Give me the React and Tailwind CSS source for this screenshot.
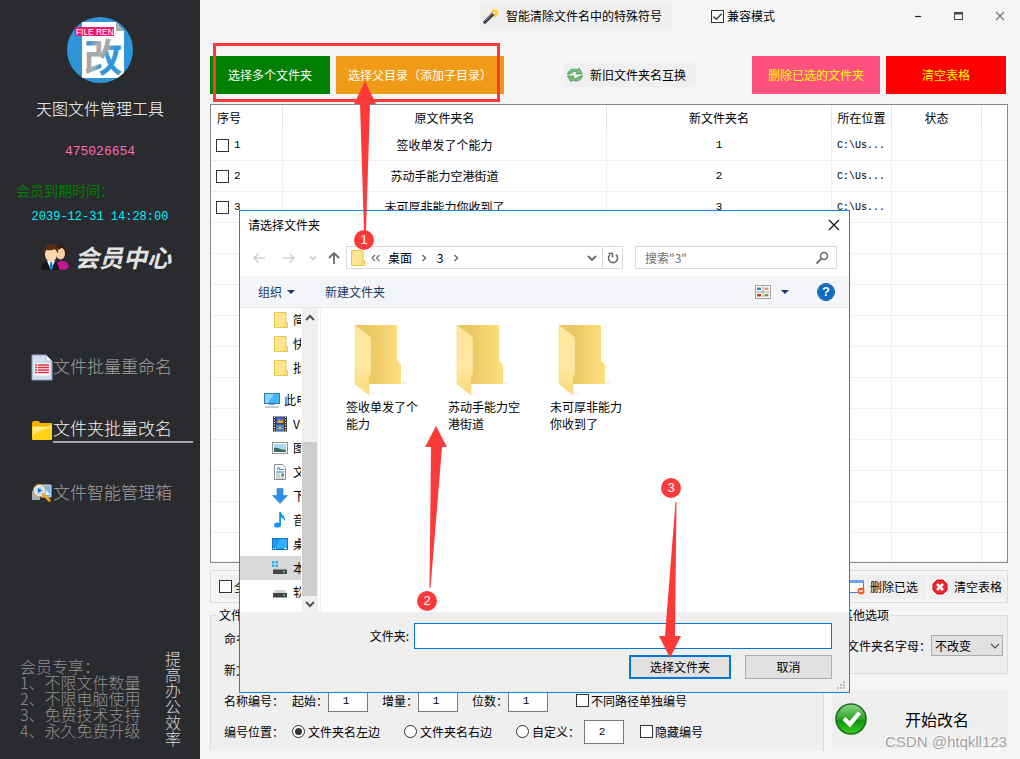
import React from "react";

const columns = [
  { name: "序号", width: "w-[72px]" },
  { name: "原文件夹名", width: "" },
  { name: "新文件夹名", width: "w-[225px]" },
  { name: "所在位置", width: "w-[60px]" },
  { name: "状态", width: "w-[90px]" },
  { name: "", width: "w-[25px]" },
];

const rows = [
  { id: "1", from: "签收单发了个能力", to: "1", path: "C:\\Us..." },
  { id: "2", from: "苏动手能力空港街道", to: "2", path: "C:\\Us..." },
  { id: "3", from: "未可厚非能力你收到了", to: "3", path: "C:\\Us..." },
];

const mono = "font-['Liberation_Mono','Noto_Sans_CJK_SC',monospace]";

/* ---------- form parts ---------- */

function Tick({ label, checked = false, gap = "gap-[2px]", text = "" }) {
  return (
    <label className={"flex items-center whitespace-nowrap " + gap}>
      <span className="relative block size-[13px] shrink-0">
        <input
          type="checkbox"
          defaultChecked={checked}
          className="peer block size-[13px] appearance-none border border-[#333] bg-white"
        />
        <svg viewBox="0 0 13 13" className="pointer-events-none absolute inset-0 hidden size-[13px] peer-checked:block">
          <path d="M2.5 6.5 5.3 9.3 10.7 3.7" fill="none" stroke="#333" strokeWidth="1.3" />
        </svg>
      </span>
      <span className={text}>{label}</span>
    </label>
  );
}

function Radio({ label, checked = false }) {
  return (
    <label className="flex items-center gap-[3px] whitespace-nowrap">
      <input
        type="radio"
        name="position"
        defaultChecked={checked}
        className="grid size-[13px] shrink-0 appearance-none place-items-center rounded-full border border-[#333] bg-white before:size-[7px] before:rounded-full checked:before:bg-[#333] checked:before:content-['']"
      />
      {label}
    </label>
  );
}

function NumberBox({ label, value }) {
  return (
    <label className="flex items-center">
      {label}
      <input
        type="text"
        defaultValue={value}
        className={"h-[22px] w-10 border border-[#7a7a7a] bg-white pr-1 text-center text-[11px] " + mono}
      />
    </label>
  );
}

/* ---------- icons ---------- */

function Logo() {
  return (
    <svg viewBox="0 0 66 66" className="size-[66px]">
      <defs>
        <linearGradient id="logoGlyph" x1="0" y1="0" x2="1" y2="1">
          <stop offset="0.05" stopColor="#a4a9ae" />
          <stop offset="0.2" stopColor="#2f94d8" />
          <stop offset="0.32" stopColor="#a4a9ae" />
          <stop offset="0.5" stopColor="#a4a9ae" />
          <stop offset="0.58" stopColor="#2f94d8" />
          <stop offset="0.85" stopColor="#2f94d8" />
          <stop offset="0.95" stopColor="#a4a9ae" />
        </linearGradient>
        <clipPath id="logoDisc">
          <circle cx="33" cy="33" r="33" />
        </clipPath>
      </defs>
      <g clipPath="url(#logoDisc)">
        <rect width="66" height="66" fill="#2f94d8" />
        <path d="M15 5H49L57 14V61H15Z" fill="#fff" />
        <path d="M49 5V14H57Z" fill="#a9b1b8" />
      </g>
      <text
        x="17"
        y="54"
        fontSize="38"
        fontWeight="500"
        fontFamily="'Noto Sans CJK SC', sans-serif"
        fill="url(#logoGlyph)"
        stroke="url(#logoGlyph)"
        strokeWidth="0.8"
      >
        改
      </text>
      <rect x="8" y="10" width="39" height="9" fill="#ea1a6c" />
      <text x="9" y="17.5" fontSize="8.4" fontFamily="'Liberation Sans', sans-serif" fill="#fff">FILE REN</text>
    </svg>
  );
}

function PeopleIcon() {
  return (
    <svg viewBox="0 0 28 28" className="h-7 w-7">
      <path d="M15 26c0-6 2-8 6-8s7 3 7 6l-4 3z" fill="#c4168f" />
      <path d="M14 9c0-5 3-7 6-7 4 0 6 4 5 9l-2 3h-7z" fill="#3b1d12" />
      <ellipse cx="19.500" cy="10.500" rx="4.500" ry="6" fill="#f7cfa6" />
      <path d="M15 7c2 0 5-1 7-3 2 2 3 4 3 5V6c-2-4-8-4-10 0z" fill="#3b1d12" />
      <path d="M0 27c0-7 3-9 9-9s9 3 9 9z" fill="#15161c" />
      <path d="M6 18l4 9 4-9z" fill="#fff" />
      <path d="M9.200 19h2l.8 6-1.800 2-1.800-2z" fill="#1884d8" />
      <ellipse cx="10" cy="11.500" rx="6" ry="7.500" fill="#fcd6ad" />
      <path d="M3 11C2 4 6 1 10.500 1S18 4 17 11c-1-3-2-4-3-5-3 2-7 1-9 1-1 1-1 2-2 4z" fill="#5a2c12" />
    </svg>
  );
}

function DocIcon() {
  return (
    <svg viewBox="0 0 22 27" className="h-[27px] w-[22px] shrink-0">
      <path d="M1 1h14l6 6v19H1z" fill="#d3dff0" stroke="#8fa3c4" />
      <path d="M15 1v6h6z" fill="#fff" stroke="#8fa3c4" strokeWidth=".7" />
      <path d="M3.500 9.500h15v12h-15z" fill="#fff" />
      <path d="M4 11h14M4 13.500h14M4 16h14M4 18.500h14" stroke="#d9333f" strokeWidth="1.500" />
      <path d="M6.500 10v10" stroke="#fff" strokeWidth=".7" />
    </svg>
  );
}

function YellowFolderIcon() {
  return (
    <svg viewBox="0 0 22 22" className="size-[22px] shrink-0">
      <path d="M1 4Q1 2 3 2h4q1 0 1.500 1L9 4h11q1 0 1 1v15H1z" fill="#f0b400" />
      <path d="M1 7h16l4-2v15q0 1-1 1H2q-1 0-1-1z" fill="#ffd21c" />
      <path d="M2 8h16l2-2v3Q8 10 2 17z" fill="#ffea86" />
    </svg>
  );
}

function SearchToolIcon() {
  return (
    <svg viewBox="0 0 22 20" className="h-5 w-[22px] shrink-0">
      <path d="M10 2h10v12H10z" fill="#7db7e8" stroke="#c7dff2" />
      <path d="M12 12l3-6 4 6z" fill="#d9ecfa" />
      <path d="M1 8h8v9H1z" fill="#a8aeb4" />
      <circle cx="8.500" cy="7.500" r="5" fill="#bfe2fa" stroke="#e9e4da" strokeWidth="2" />
      <circle cx="8.500" cy="7.500" r="6.200" fill="none" stroke="#e09a30" strokeWidth=".9" />
      <path d="M7 5l4 2.500L7 10z" fill="#1c6fb5" />
      <path d="M12.500 11.500l6 6" stroke="#f2a51c" strokeWidth="2.600" strokeLinecap="round" />
    </svg>
  );
}

function WandIcon() {
  return (
    <svg viewBox="0 0 16 16" className="size-4 shrink-0">
      <path d="M11 0l1 2 2-1-.5 2.300L16 4l-2 1.500 1.500 2-2.500 0-.5 2.500-1.500-2-2 1 .3-2.500L7 5.500l2-1L8.500 2l2 .5z" fill="#ffc81e" />
      <path d="M1.800 14.200L10 6" stroke="#3a3f45" strokeWidth="3.200" strokeLinecap="round" />
      <path d="M1.500 13.500L9 6" stroke="#9aa1a8" strokeWidth=".8" />
      <path d="M10 6l2-2" stroke="#f5f0d8" strokeWidth="2.400" />
    </svg>
  );
}

function SwapIcon() {
  return (
    <svg viewBox="0 0 16 16" className="size-4 shrink-0">
      <path d="M.6 7.500C1 3 6 .5 10.500 3L12 1l3.500 6H9l1.300-1.800C8 4 5.500 4.500 5 6z" fill="#7cc07c" stroke="#3f8b47" strokeWidth=".7" />
      <path d="M15.400 8.500C15 13 10 15.500 5.500 13L4 15 .5 9H7l-1.300 1.800C8 12 10.500 11.500 11 10z" fill="#7cc07c" stroke="#3f8b47" strokeWidth=".7" />
    </svg>
  );
}

function WindowMinusIcon() {
  return (
    <svg viewBox="0 0 16 16" className="size-4 shrink-0">
      <rect x="0.500" y="1.500" width="14" height="12" fill="#fff" stroke="#4a7fc8" />
      <rect x="0" y="1" width="15" height="3" fill="#6fa3e6" />
      <circle cx="12" cy="12" r="3.500" fill="#e8641b" />
      <path d="M10 12h4" stroke="#fff" strokeWidth="1.300" />
    </svg>
  );
}

function RedCrossIcon() {
  return (
    <svg viewBox="0 0 16 16" className="size-4 shrink-0">
      <path d="M5 1h6l4 4v6l-4 4H5l-4-4V5z" fill="#f0262d" stroke="#cc0f18" />
      <path d="M5 5l6 6M11 5l-6 6" stroke="#fff" strokeWidth="2.600" />
    </svg>
  );
}

function GreenCheckIcon() {
  return (
    <svg viewBox="0 0 32 32" className="size-8 shrink-0">
      <defs>
        <linearGradient id="okFill" x1="0" y1="0" x2="0" y2="1">
          <stop offset="0" stopColor="#8fd98a" />
          <stop offset="0.5" stopColor="#2fa42b" />
          <stop offset="0.55" stopColor="#13930f" />
          <stop offset="1" stopColor="#2fd11f" />
        </linearGradient>
      </defs>
      <circle cx="16" cy="16" r="15" fill="url(#okFill)" stroke="#1d6b22" strokeWidth="1.500" />
      <path d="M7.500 17l3-3 4 4 8.500-9.500 3 2.500L15 24.500z" fill="#fff" />
    </svg>
  );
}

function SmallFolder() {
  return (
    <svg viewBox="0 0 14 16" className="h-4 w-[14px] shrink-0">
      <path d="M.5.500h11.500v10h1.500v5H.5z" fill="#ffe591" stroke="#e8c445" />
      <path d="M11 15v-3.500l1-1" fill="none" stroke="#e8c445" />
    </svg>
  );
}

function BigFolder({ id }) {
  return (
    <svg viewBox="0 0 56 72" className="ml-2 h-[72px] w-14">
      <defs>
        <linearGradient id={id + "b"} x1="0" y1="0" x2="1" y2="0">
          <stop offset="0.3" stopColor="#e9c763" />
          <stop offset="1" stopColor="#ffe080" />
        </linearGradient>
        <linearGradient id={id + "f"} x1="0" y1="0" x2="0" y2="1">
          <stop offset="0" stopColor="#ffe69c" />
          <stop offset="0.6" stopColor="#ffe8a3" />
          <stop offset="1" stopColor="#fbd974" />
        </linearGradient>
      </defs>
      <path d="M46 60l7-3-1 2-5 1zM16 70l5-2-2 2z" fill="#e3e3e3" />
      <path d="M1 1H43V36L47 41V60H1Z" fill={"url(#" + id + "b)"} />
      <path d="M1 1L15 11.500Q17 13 17 15V50L15 53V71L1 60Z" fill={"url(#" + id + "f)"} stroke="#f3d27a" strokeWidth=".5" />
    </svg>
  );
}

function TreeIcon({ kind }) {
  if (kind === "folder") return <SmallFolder />;
  return (
    <svg viewBox="0 0 16 16" className="size-4 shrink-0">
      {kind === "pc" && (
        <>
          <rect x="0.500" y="1.500" width="15" height="10" fill="#43b6f7" stroke="#3a7ca8" />
          <path d="M1 2h9L4 11H1z" fill="#8ad4fb" />
          <path d="M5 12.500h6M1 15h14" stroke="#7fa0b5" />
        </>
      )}
      {kind === "video" && (
        <>
          <rect x="1" y="0.500" width="14" height="15" fill="#333" />
          <rect x="4" y="1" width="8" height="6.500" fill="#4059c7" />
          <rect x="4" y="8.500" width="8" height="6.500" fill="#3f7fd6" />
          <path d="M5 6l2-3 2 2 2-2v4H5zM5 13l3-3 3 3z" fill="#e8a22b" />
          <path d="M2.500 1v15M13.500 1v15" stroke="#fff" strokeWidth="1.200" strokeDasharray="1 1.500" />
        </>
      )}
      {kind === "picture" && (
        <>
          <rect x="0.500" y="2.500" width="15" height="11" fill="#fff" stroke="#8a8f94" />
          <rect x="2" y="4" width="12" height="8" fill="#a9d7f5" />
          <path d="M2 8c4-1 6 2 12 2v2H2z" fill="#3d6c5c" />
        </>
      )}
      {kind === "doc" && (
        <>
          <path d="M2.500.500h8l3 3v12h-11z" fill="#fff" stroke="#8a8f94" />
          <path d="M5 6l1.500-3L8 6M8.500 5.500h3M4 8h8" stroke="#1c86c8" strokeWidth="1" fill="none" />
          <path d="M4 10h4M4 12h4M4 14h8" stroke="#9aa" />
          <rect x="9" y="9.500" width="3" height="3" fill="#4c9c6c" />
        </>
      )}
      {kind === "down" && <path d="M5 0.500h6v7h4.500L8 15.500.5 7.500H5z" fill="#2f8fe6" stroke="#2679cc" strokeWidth=".6" />}
      {kind === "music" && (
        <>
          <ellipse cx="5.500" cy="13" rx="3.500" ry="2.600" fill="#1296f0" />
          <path d="M7.200 0h1.800c0 3 5 4 4 9.500-.7-2.500-2-3.500-4-4v8H7.200z" fill="#1296f0" />
        </>
      )}
      {kind === "desktop" && (
        <>
          <rect x="0.500" y="2.500" width="15" height="11" fill="#1a9cf5" stroke="#1670b8" />
          <path d="M8 3h7v9H4z" fill="#33aefb" />
          <path d="M1 12.500h1M3 12.500h1M12 12.500h3" stroke="#fff" />
        </>
      )}
      {kind === "system" && (
        <>
          <path d="M0 1h2.500v2.500H0zM3.500 1H6v2.500H3.500zM0 4.500h2.500V7H0zM3.500 4.500H6V7H3.500z" fill="#1fb6f2" />
          <path d="M3 7h10l2 3H1z" fill="#d0d3d6" />
          <rect x="1" y="9.500" width="14" height="4.500" rx=".5" fill="#444" />
          <rect x="11" y="11" width="2" height="1.500" fill="#3ee04a" />
        </>
      )}
      {kind === "drive" && (
        <>
          <path d="M3 6h10l2 3.500H1z" fill="#d0d3d6" />
          <rect x="1" y="9" width="14" height="4.500" rx=".5" fill="#444" />
          <rect x="11" y="10.500" width="2" height="1.500" fill="#3ee04a" />
        </>
      )}
    </svg>
  );
}

function Stroke({ d, box = "0 0 16 16", className = "size-4", color = "#6b6b6b", width = 1.5 }) {
  return (
    <svg viewBox={box} className={"shrink-0 " + className}>
      <path d={d} fill="none" stroke={color} strokeWidth={width} />
    </svg>
  );
}

function Triangle() {
  return (
    <svg viewBox="0 0 8 4" className="h-1 w-2 shrink-0">
      <path d="M0 0h8L4 4z" fill="#1f3a68" />
    </svg>
  );
}

/* ---------- sidebar ---------- */

function NavItem({ icon, label, active = false }) {
  return (
    <a href="#" className="flex h-7 items-center pl-[31px]">
      {icon}
      <span
        className={
          active
            ? "h-[26px] w-[140px] border-b-2 border-[#a5a5a5] text-[17px] leading-[22px] text-[#f2f2f2]"
            : "h-[26px] text-[17px] leading-6 text-[#a0a0a0]"
        }
      >
        {label}
      </span>
    </a>
  );
}

function Sidebar() {
  return (
    <aside className="flex w-[200px] shrink-0 flex-col bg-[#2a2b2f] pt-[17px] pb-[13px]">
      <div className="flex flex-col items-center">
        <Logo />
        <h1 className="mt-[15px] text-base leading-5 font-light text-white">天图文件管理工具</h1>
        <p className={"mt-6 text-[13px] leading-5 text-[#ff69b4] " + mono}>475026654</p>
      </div>
      <p className="mt-[18px] pl-4 text-[14px] leading-5 text-[#008000]">会员到期时间：</p>
      <p className={"mt-[7px] text-center text-xs leading-5 text-[#00f0f8] " + mono}>2039-12-31 14:28:00</p>
      <a href="#" className="mt-[14px] flex h-8 items-center gap-[6px] pl-[41px] text-2xl font-bold text-[#e2e2e2] italic">
        <PeopleIcon />
        会员中心
      </a>
      <nav className="mt-20 flex flex-col gap-[35px] font-light">
        <NavItem icon={<DocIcon />} label="文件批量重命名" />
        <NavItem icon={<YellowFolderIcon />} label="文件夹批量改名" active />
        <NavItem icon={<SearchToolIcon />} label="文件智能管理箱" />
      </nav>
      <div className="mt-auto flex items-center justify-between pr-[19px] pl-5 text-base font-light">
        <div className="leading-4 whitespace-nowrap text-[#909090]">
          <p>会员专享：</p>
          <p>1、不限文件数量</p>
          <p>2、不限电脑使用</p>
          <p>3、免费技术支持</p>
          <p>4、永久免费升级</p>
        </div>
        <p className="w-4 leading-4 break-all text-[#d8d8d8]">提高办公效率</p>
      </div>
    </aside>
  );
}

/* ---------- main window ---------- */

function TitleBar() {
  return (
    <header className="flex h-8 items-center justify-end">
      <button className="mr-[39px] flex h-[30px] items-center gap-[7px] bg-[#efefef] pr-[10px] pl-[3px]">
        <WandIcon />
        智能清除文件名中的特殊符号
      </button>
      <div className="mr-[122px]">
        <Tick label="兼容模式" checked gap="gap-[3px]" />
      </div>
      <button aria-label="最小化" className="flex w-[41px] justify-center">
        <Stroke d="M5 8.500h6" color="#222" width={1.2} />
      </button>
      <button aria-label="最大化" className="flex w-[41px] justify-center">
        <svg viewBox="0 0 16 16" className="size-4">
          <rect x="3.500" y="4.500" width="8" height="7" fill="none" stroke="#444" />
          <path d="M3 5.500h9" stroke="#444" strokeWidth="2" />
        </svg>
      </button>
      <button aria-label="关闭" className="flex w-[41px] justify-center">
        <Stroke d="M4 4l8 8M12 4l-8 8" color="#777" width={1.2} />
      </button>
    </header>
  );
}

function Toolbar() {
  return (
    <div className="mt-6 flex h-[38px] items-center pr-[2px]">
      <button className="h-full w-[120px] bg-[#008000] text-white">选择多个文件夹</button>
      <button className="ml-[6px] h-full w-[168px] bg-[#f09b18] text-white">选择父目录（添加子目录）</button>
      <button className="mr-14 ml-auto flex h-6 items-center gap-[7px] bg-[#efefef] pr-[10px] pl-[3px]">
        <SwapIcon />
        新旧文件夹名互换
      </button>
      <button className="mr-[6px] h-full w-32 bg-[#ff5180] text-[#ffff00]">删除已选的文件夹</button>
      <button className="h-full w-[120px] bg-[#ff0000] text-[#ffff00]">清空表格</button>
    </div>
  );
}

function FolderTable() {
  const fillers = Array.from({ length: 11 }, (_, i) => i);
  const cell = "border-r border-b border-[#f0f0f0] p-0 last:border-r-0";
  return (
    <div className="mt-[10px] border border-[#828790] bg-white">
      <table className="w-full table-fixed border-separate border-spacing-0 text-center">
        <thead>
          <tr className="h-[25px]">
            {columns.map((c, i) => (
              <th
                key={i}
                className={
                  "border-r border-[#e5e5e5] p-0 font-normal last:border-r-0 " +
                  c.width +
                  (i === 0 ? " pl-[6px] text-left" : "")
                }
              >
                {c.name}
              </th>
            ))}
          </tr>
        </thead>
        <tbody>
          {rows.map((r) => (
            <tr key={r.id} className="h-[31px]">
              <td className={cell}>
                <div className="pl-[5px]">
                  <Tick label={r.id} gap="gap-[5px]" text={"text-[11px] " + mono} />
                </div>
              </td>
              <td className={cell}>{r.from}</td>
              <td className={cell + " text-[11px] " + mono}>{r.to}</td>
              <td className={cell + " text-[10px] " + mono}>
                <div className="pt-px pl-[5px] text-left">{r.path}</div>
              </td>
              <td className={cell}></td>
              <td className={cell}></td>
            </tr>
          ))}
          {fillers.map((i) => (
            <tr key={i} className="h-[31px] last:h-[29px]">
              {columns.map((c, j) => (
                <td key={j} className={cell}></td>
              ))}
            </tr>
          ))}
        </tbody>
      </table>
    </div>
  );
}

function ActionPanel() {
  return (
    <div className="mt-[7px] flex h-[33px] items-center gap-1 border border-[#dcdcdc] pl-2">
      <div className="mr-auto flex h-6 items-center bg-[#efefef]">
        <Tick label="全选" />
      </div>
      <button className="flex h-6 items-center gap-[5px] bg-[#efefef] px-[7px]">
        <WindowMinusIcon />
        删除已选
      </button>
      <button className="flex h-6 items-center gap-[6px] bg-[#efefef] pr-[5px] pl-[3px]">
        <RedCrossIcon />
        清空表格
      </button>
    </div>
  );
}

function Settings() {
  return (
    <div className="mt-1 flex items-start gap-2">
      <fieldset className="min-w-0 flex-1 border border-b-0 border-[#dcdcdc] bg-[#efefef] pb-1 pl-[13px]">
        <legend className="-ml-[7px] px-[2px] leading-4">文件夹</legend>
        <div className="flex h-[31px] items-center">命名</div>
        <div className="flex h-[31px] items-center">新文件夹</div>
        <div className="flex h-[31px] items-center">
          <span className="mr-2">名称编号：</span>
          <div className="mr-7 flex gap-[14px]">
            <NumberBox label="起始：" value="1" />
            <NumberBox label="增量：" value="1" />
            <NumberBox label="位数：" value="1" />
          </div>
          <Tick label="不同路径单独编号" />
        </div>
        <div className="flex h-[31px] items-center">
          <span className="mr-2">编号位置：</span>
          <div className="mr-1 flex gap-6">
            <Radio label="文件夹名左边" checked />
            <Radio label="文件夹名右边" />
            <Radio label="自定义：" />
          </div>
          <input
            type="text"
            aria-label="自定义位置"
            defaultValue="2"
            className={"mr-4 h-6 w-10 border border-[#7a7a7a] bg-white pr-1 text-center text-[11px] " + mono}
          />
          <Tick label="隐藏编号" />
        </div>
      </fieldset>
      <div className="flex w-[176px] shrink-0 flex-col gap-4">
        <fieldset className="border border-[#dcdcdc] bg-[#efefef] pr-1 pb-[17px]">
          <legend className="ml-[6px] px-[2px] leading-4">其他选项</legend>
          <label className="mt-3 flex items-center justify-end whitespace-nowrap">
            文件夹名字母：
            <span className="relative">
              <select className="block h-[21px] w-[72px] appearance-none border border-[#adadad] bg-[#e1e1e1] pl-[3px] text-xs">
                <option>不改变</option>
              </select>
              <Stroke
                d="M4 6l4 4 4-4"
                color="#555"
                width={1.2}
                className="pointer-events-none absolute top-[3px] right-0 size-4"
              />
            </span>
          </label>
        </fieldset>
        <button className="flex h-[58px] items-center bg-[#efefef] pl-[3px] text-base">
          <GreenCheckIcon />
          <span className="ml-[38px]">开始改名</span>
        </button>
      </div>
    </div>
  );
}

/* ---------- folder dialog ---------- */

const treeTop = ["简历", "快捷", "批量"];
const treePc = [
  { kind: "video", name: "Videos" },
  { kind: "picture", name: "图片" },
  { kind: "doc", name: "文档" },
  { kind: "down", name: "下载" },
  { kind: "music", name: "音乐" },
  { kind: "desktop", name: "桌面" },
  { kind: "system", name: "本地磁盘", selected: true },
  { kind: "drive", name: "软件" },
];

function FolderTree() {
  return (
    <ul className="w-[61px] shrink-0 overflow-hidden pb-2 whitespace-nowrap">
      {treeTop.map((name) => (
        <li key={name} className="flex h-6 items-center gap-[5px] pl-[34px]">
          <TreeIcon kind="folder" />
          {name}
        </li>
      ))}
      <li className="mt-2 flex h-6 items-center gap-1 pl-6">
        <TreeIcon kind="pc" />
        此电脑
      </li>
      {treePc.map((t) => (
        <li
          key={t.name}
          className={"flex h-6 items-center gap-[5px] pl-8 " + (t.selected ? "bg-[#d9d9d9]" : "")}
        >
          <TreeIcon kind={t.kind} />
          {t.name}
        </li>
      ))}
    </ul>
  );
}

function FolderItem({ name, id }) {
  return (
    <button className="flex w-[74px] flex-col text-left leading-[17px] break-all">
      <BigFolder id={id} />
      <span className="mt-[2px] block w-[73px]">{name}</span>
    </button>
  );
}

function FolderDialog() {
  return (
    <section
      role="dialog"
      aria-label="请选择文件夹"
      className="absolute top-[210px] left-[239px] w-[611px] border border-[#1883d7] bg-white text-black"
    >
      <div className="flex h-7 items-center justify-between pr-[7px] pl-2">
        <h2>请选择文件夹</h2>
        <button aria-label="关闭">
          <Stroke d="M3 3l10 10M13 3L3 13" color="#111" width={1.2} />
        </button>
      </div>

      <div className="flex h-[37px] items-center pr-3 pl-[11px]">
        <button aria-label="后退" className="mr-[14px]">
          <Stroke d="M14 8H3M7.500 3.500L3 8l4.500 4.500" color="#d0d0d0" />
        </button>
        <button aria-label="前进" className="mr-2">
          <Stroke d="M2 8h11M8.500 3.500L13 8l-4.500 4.500" color="#d0d0d0" />
        </button>
        <button aria-label="最近位置" className="mr-[5px]">
          <Stroke d="M5 6.500l3 3 3-3" color="#c4c4c4" />
        </button>
        <button aria-label="上移" className="mr-1">
          <Stroke d="M8 14V3M3 8l5-5 5 5" color="#6b6b6b" width={1.8} />
        </button>
        <div className="mr-3 flex h-[23px] flex-1 items-center border border-[#d9d9d9] pl-1">
          <SmallFolder />
          <Stroke d="M7 5L4 8l3 3M11.500 5l-3 3 3 3" className="ml-[3px] size-4" width={1.2} />
          <span className="ml-1">桌面</span>
          <Stroke d="M6.500 5l3 3-3 3" className="ml-1 size-4" />
          <span className="ml-1 w-2 text-center">3</span>
          <Stroke d="M6.500 5l3 3-3 3" className="ml-1 size-4" />
          <button aria-label="展开" className="ml-auto">
            <Stroke d="M4 6l4 4 4-4" width={1.8} />
          </button>
          <button aria-label="刷新" className="ml-[2px] flex h-full w-5 items-center justify-center border-l border-[#d9d9d9]">
            <Stroke d="M4.800 5A4.500 4.500 0 1 0 10.800 4.600M3.500 3.500h4v4" width={1.6} />
          </button>
        </div>
        <label className="flex h-[23px] w-[202px] items-center border border-[#d9d9d9] pr-[6px] pl-[9px]">
          <input
            type="text"
            aria-label="搜索"
            placeholder={'搜索"3"'}
            className="min-w-0 flex-1 text-xs outline-none placeholder:text-[#6d6d6d]"
          />
          <svg viewBox="0 0 16 16" className="size-4">
            <circle cx="10" cy="6" r="3.500" fill="none" stroke="#6b6b6b" strokeWidth="1.600" />
            <path d="M7.500 8.500L2.500 13.500" stroke="#6b6b6b" strokeWidth="1.800" />
          </svg>
        </label>
      </div>

      <div className="flex h-8 items-center border-b border-[#e4e6e9] bg-[#f4f5f8] pr-[15px] pl-[18px] text-[#1e395b]">
        <button className="flex items-center gap-[5px]">
          组织
          <Triangle />
        </button>
        <button className="ml-[30px]">新建文件夹</button>
        <button aria-label="更改视图" className="ml-auto flex items-center gap-[10px]">
          <svg viewBox="0 0 16 14" className="h-[14px] w-4">
            <path d="M.5.500h15v13H.5zM8 .5v13M.5 7h15" fill="#fff" stroke="#a0a0a0" />
            <rect x="2" y="2.500" width="4" height="2.500" fill="#3c8fa8" />
            <rect x="9.500" y="2.500" width="4" height="2.500" fill="#e39a4a" />
            <rect x="2" y="9" width="4" height="2.500" fill="#cf3a1d" />
            <rect x="9.500" y="9" width="4" height="2.500" fill="#7a9a2a" />
          </svg>
          <Triangle />
        </button>
        <button
          aria-label="帮助"
          className="ml-[29px] size-4 rounded-full bg-[#0a6bc9] font-['Liberation_Sans',sans-serif] text-[13px] leading-4 font-bold text-white outline outline-[#084f96]"
        >
          ?
        </button>
      </div>

      <div className="flex">
        <FolderTree />
        <div className="ml-px flex w-4 shrink-0 flex-col items-center bg-[#f0f0f0]">
          <Stroke d="M4 10l4-4 4 4" className="mt-[2px] size-4" color="#505050" width={2} />
          <div className="mt-auto h-[154px] w-[15px] self-start bg-[#cdcdcd]" />
          <Stroke d="M4 6l4 4 4-4" className="size-4" color="#505050" width={2} />
        </div>
        <div className="ml-[2px] flex flex-1 items-start gap-7 border-l border-[#f0f0f0] pt-4 pl-[25px]">
          <FolderItem id="a" name="签收单发了个能力" />
          <FolderItem id="c" name="苏动手能力空港街道" />
          <FolderItem id="d" name="未可厚非能力你收到了" />
        </div>
      </div>

      <div className="relative flex flex-col gap-[6px] bg-[#efefef] pt-[11px] pr-[17px] pb-[13px]">
        <label className="flex items-center justify-end gap-[5px]">
          文件夹:
          <input type="text" className="h-[26px] w-[418px] border border-[#0078d7] bg-white px-1 outline-none" />
        </label>
        <div className="flex justify-end gap-[14px]">
          <button className="h-6 w-[102px] border-2 border-[#0078d7] bg-[#e1e1e1] leading-5">选择文件夹</button>
          <button className="h-6 w-[87px] border border-[#adadad] bg-[#e1e1e1] leading-5">取消</button>
        </div>
        <svg viewBox="0 0 9 9" className="absolute right-[3px] bottom-[2px] size-[9px]">
          <path d="M6 0h2v2H6zM3 3h2v2H3zM6 3h2v2H6zM0 6h2v2H0zM3 6h2v2H3zM6 6h2v2H6z" fill="#bcbcbc" />
        </svg>
      </div>
    </section>
  );
}

/* ---------- numbered guide marks ---------- */

function Badge({ n, place }) {
  return (
    <span
      className={
        "absolute size-5 rounded-full bg-[#fc3a3a] text-center font-['Liberation_Sans',sans-serif] text-[13px] leading-5 text-white " +
        place
      }
    >
      {n}
    </span>
  );
}

function Guides() {
  return (
    <div className="pointer-events-none absolute inset-0">
      <div className="absolute top-[43px] left-[213px] h-[59px] w-[287px] border-[3px] border-[#fc3a3a]" />
      <svg viewBox="0 0 22 150" className="absolute top-[81px] left-[354px] h-[150px] w-[22px]">
        <path d="M11 0L22 23H16L12 150H10L6 23H0Z" fill="#fc3a3a" />
      </svg>
      <svg viewBox="0 0 22 162" className="absolute top-[426px] left-[425px] h-[162px] w-[22px]">
        <path d="M11 0L22 21H17L5.500 162H4.500L6 21H0Z" fill="#fc3a3a" />
      </svg>
      <svg viewBox="0 0 22 156" className="absolute top-[502px] left-[659px] h-[156px] w-[22px]">
        <path d="M11 156L22 134H16L17.500 0H16.500L6 134H0Z" fill="#fc3a3a" />
      </svg>
      <Badge n="1" place="top-[230px] left-[354px]" />
      <Badge n="2" place="top-[591px] left-[417px]" />
      <Badge n="3" place="top-[478px] left-[661px]" />
      <p className="absolute top-[732px] left-[885px] font-['Liberation_Sans',sans-serif] text-[15px] leading-5 text-[#a3a3a3] [text-shadow:-1px_-1px_0_#fff]">
        CSDN @htqkll123
      </p>
    </div>
  );
}

export default function App() {
  return (
    <div className="relative flex min-h-screen bg-[#f5f5f5] font-['Noto_Sans_CJK_SC',sans-serif] text-xs text-black">
      <Sidebar />
      <main className="flex min-w-0 flex-1 flex-col">
        <TitleBar />
        <div className="flex flex-col pr-3 pb-[7px] pl-[10px]">
          <Toolbar />
          <FolderTable />
          <ActionPanel />
          <Settings />
        </div>
      </main>
      <FolderDialog />
      <Guides />
    </div>
  );
}
